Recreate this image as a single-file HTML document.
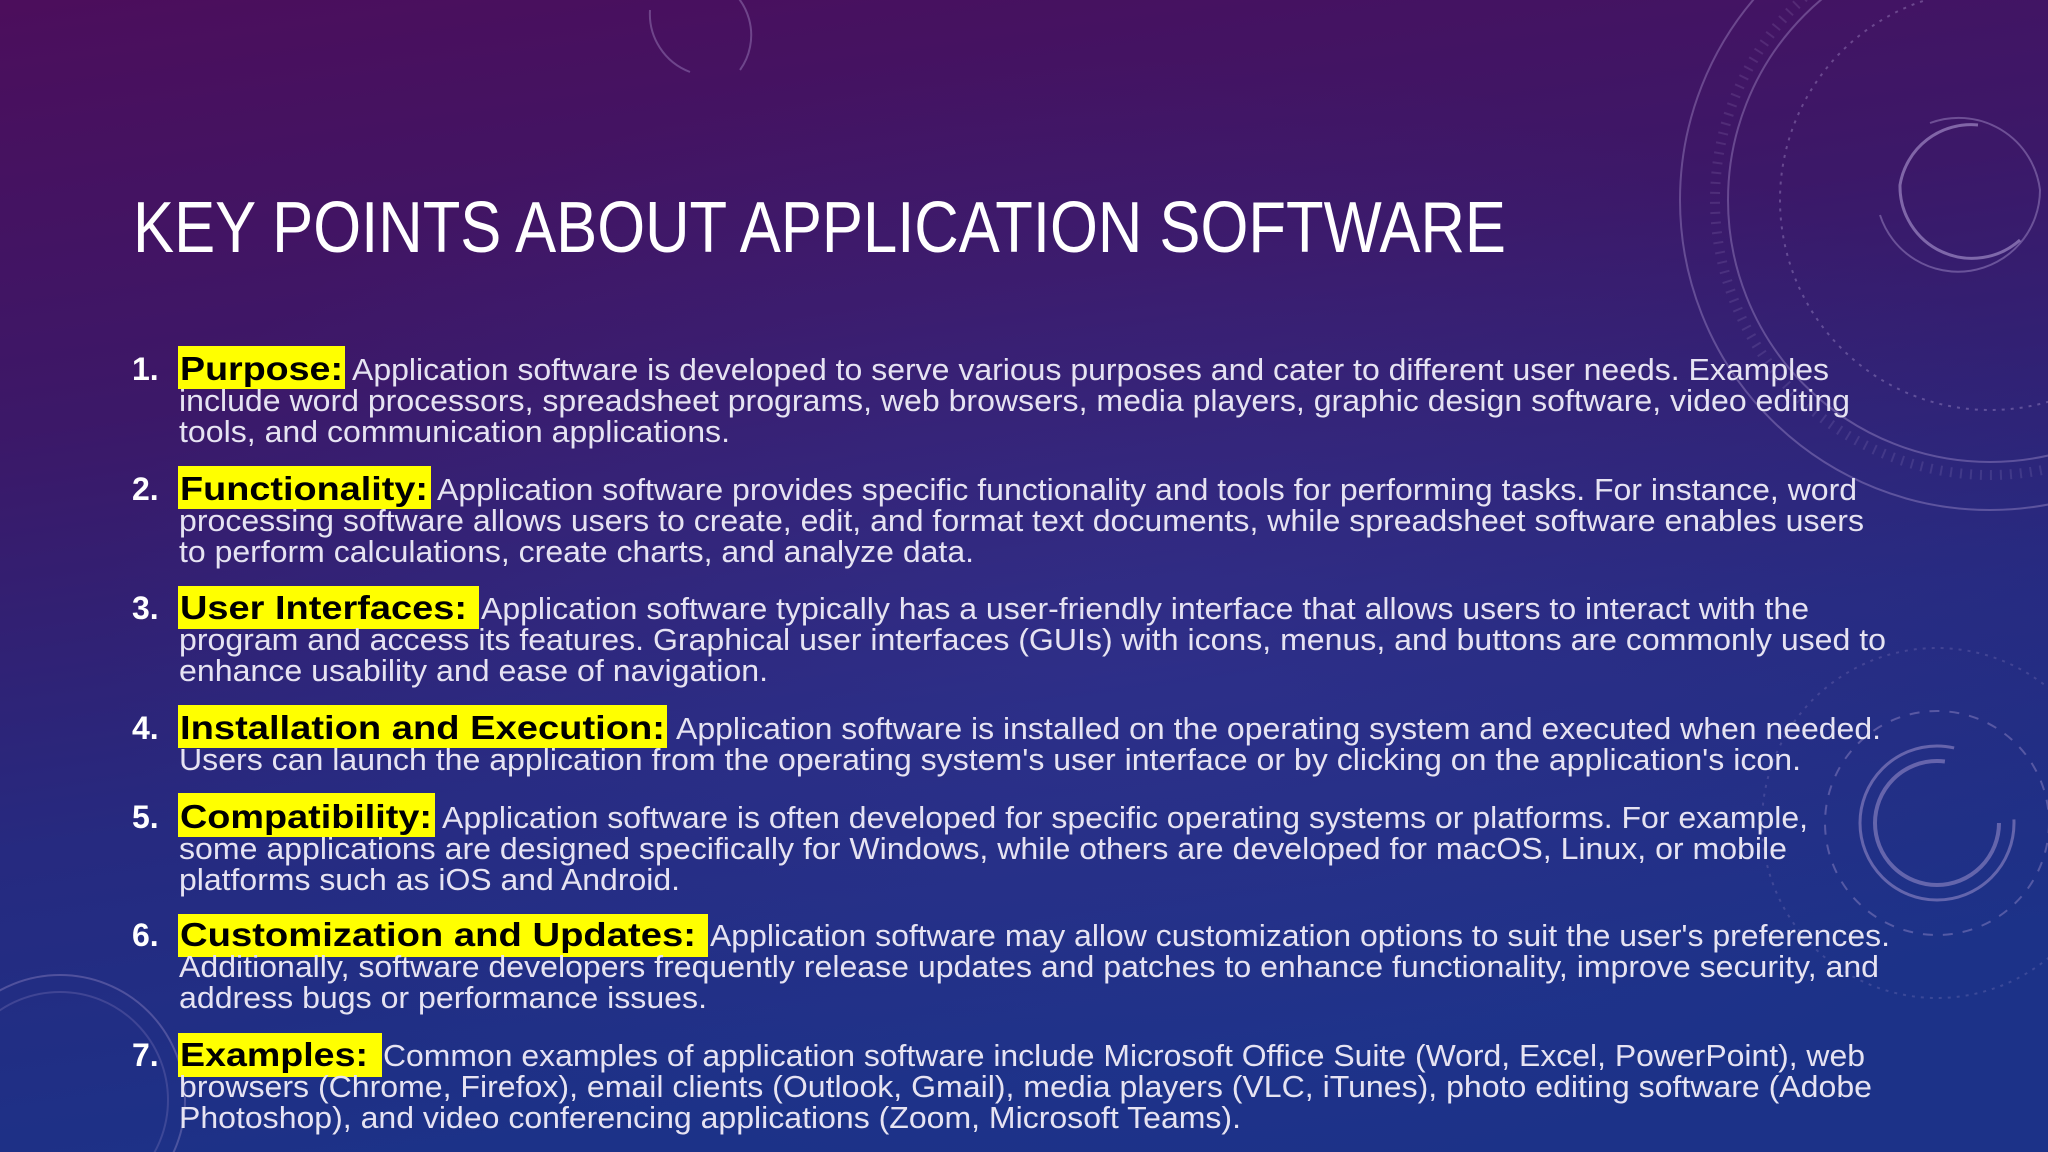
<!DOCTYPE html>
<html><head><meta charset="utf-8"><style>
html,body{margin:0;padding:0;width:2048px;height:1152px;overflow:hidden;}
svg{display:block;}
.b{font-family:"Liberation Sans",Arial,sans-serif;font-size:31px;fill:#e6e3f2;}
.n{font-family:"Liberation Sans",Arial,sans-serif;font-size:32px;font-weight:bold;fill:#fff;}
.l{font-family:"Liberation Sans",Arial,sans-serif;font-size:33px;font-weight:bold;fill:#000;}
.hl{fill:#ffff00;}
</style></head><body>
<svg width="2048" height="1152" viewBox="0 0 2048 1152" xmlns="http://www.w3.org/2000/svg">
<defs>
<linearGradient id="bg" x1="0" y1="0" x2="0.25" y2="1">
<stop offset="0" stop-color="#4c0e5c"/>
<stop offset="0.35" stop-color="#3c1868"/>
<stop offset="0.7" stop-color="#262a80"/>
<stop offset="1" stop-color="#1c3288"/>
</linearGradient>
<radialGradient id="glow" cx="0.55" cy="0.55" r="0.5">
<stop offset="0" stop-color="#3a3a9a" stop-opacity="0.35"/>
<stop offset="1" stop-color="#3a3a9a" stop-opacity="0"/>
</radialGradient>
</defs>
<rect width="2048" height="1152" fill="url(#bg)"/>
<rect width="2048" height="1152" fill="url(#glow)"/>
<g fill="none" stroke="#b9a6dc" stroke-opacity="0.35" stroke-width="2">
<circle cx="1990" cy="200" r="310"/>
<circle cx="1990" cy="200" r="262"/>
<circle cx="1990" cy="200" r="275" stroke-dasharray="2 8" stroke-width="10" stroke-opacity="0.15"/>
<circle cx="1990" cy="200" r="210" stroke-dasharray="3 6"/>
<path d="M1978 125 A72 72 0 0 0 1900 185 A72 72 0 0 0 2020 240" stroke-width="3" stroke-opacity="0.55"/>
<path d="M1930 123 A82 82 0 0 1 2040 190 A82 82 0 0 1 1880 215" stroke-opacity="0.4"/>
<path d="M715 -20 A60 60 0 0 1 740 70 M690 72 A62 62 0 0 1 650 10" />
<circle cx="1937" cy="823" r="77" stroke-width="3" stroke-dasharray="380 100" stroke-opacity="0.45"/>
<circle cx="1937" cy="823" r="62" stroke-width="4" stroke-dasharray="300 90" stroke-opacity="0.45"/>
<circle cx="1937" cy="823" r="112" stroke-dasharray="10 10"/>
<circle cx="1937" cy="823" r="175" stroke-dasharray="3 6" stroke-opacity="0.2"/>
<circle cx="60" cy="1100" r="125" stroke-opacity="0.3"/>
<circle cx="60" cy="1100" r="108" stroke-opacity="0.2"/>
</g>
<text x="133" y="252" font-family="Liberation Sans, sans-serif" font-size="72" fill="#fff" textLength="1373" lengthAdjust="spacingAndGlyphs">KEY POINTS ABOUT APPLICATION SOFTWARE</text>

<rect class="hl" x="178" y="346" width="167" height="43"/>
<text class="n" x="132" y="380">1.</text>
<text class="l" x="180" y="380" textLength="163" lengthAdjust="spacingAndGlyphs">Purpose:</text>
<text class="b" x="352" y="380" textLength="1477" lengthAdjust="spacingAndGlyphs">Application software is developed to serve various purposes and cater to different user needs. Examples</text>
<text class="b" x="179" y="411" textLength="1671" lengthAdjust="spacingAndGlyphs">include word processors, spreadsheet programs, web browsers, media players, graphic design software, video editing</text>
<text class="b" x="179" y="442" textLength="551" lengthAdjust="spacingAndGlyphs">tools, and communication applications.</text>

<rect class="hl" x="178" y="466" width="253" height="43"/>
<text class="n" x="132" y="500">2.</text>
<text class="l" x="180" y="500" textLength="248" lengthAdjust="spacingAndGlyphs">Functionality:</text>
<text class="b" x="437" y="500" textLength="1420" lengthAdjust="spacingAndGlyphs">Application software provides specific functionality and tools for performing tasks. For instance, word</text>
<text class="b" x="179" y="531" textLength="1685" lengthAdjust="spacingAndGlyphs">processing software allows users to create, edit, and format text documents, while spreadsheet software enables users</text>
<text class="b" x="179" y="562" textLength="795" lengthAdjust="spacingAndGlyphs">to perform calculations, create charts, and analyze data.</text>

<rect class="hl" x="178" y="586" width="301" height="43"/>
<text class="n" x="132" y="619">3.</text>
<text class="l" x="180" y="619" textLength="287" lengthAdjust="spacingAndGlyphs">User Interfaces:</text>
<text class="b" x="481" y="619" textLength="1328" lengthAdjust="spacingAndGlyphs">Application software typically has a user-friendly interface that allows users to interact with the</text>
<text class="b" x="179" y="650" textLength="1707" lengthAdjust="spacingAndGlyphs">program and access its features. Graphical user interfaces (GUIs) with icons, menus, and buttons are commonly used to</text>
<text class="b" x="179" y="681" textLength="589" lengthAdjust="spacingAndGlyphs">enhance usability and ease of navigation.</text>

<rect class="hl" x="178" y="705" width="489" height="43"/>
<text class="n" x="132" y="739">4.</text>
<text class="l" x="180" y="739" textLength="485" lengthAdjust="spacingAndGlyphs">Installation and Execution:</text>
<text class="b" x="676" y="739" textLength="1205" lengthAdjust="spacingAndGlyphs">Application software is installed on the operating system and executed when needed.</text>
<text class="b" x="179" y="770" textLength="1622" lengthAdjust="spacingAndGlyphs">Users can launch the application from the operating system's user interface or by clicking on the application's icon.</text>

<rect class="hl" x="178" y="793" width="257" height="44"/>
<text class="n" x="132" y="828">5.</text>
<text class="l" x="180" y="828" textLength="252" lengthAdjust="spacingAndGlyphs">Compatibility:</text>
<text class="b" x="442" y="828" textLength="1366" lengthAdjust="spacingAndGlyphs">Application software is often developed for specific operating systems or platforms. For example,</text>
<text class="b" x="179" y="859" textLength="1608" lengthAdjust="spacingAndGlyphs">some applications are designed specifically for Windows, while others are developed for macOS, Linux, or mobile</text>
<text class="b" x="179" y="890" textLength="501" lengthAdjust="spacingAndGlyphs">platforms such as iOS and Android.</text>

<rect class="hl" x="178" y="914" width="530" height="43"/>
<text class="n" x="132" y="946">6.</text>
<text class="l" x="180" y="946" textLength="516" lengthAdjust="spacingAndGlyphs">Customization and Updates:</text>
<text class="b" x="710" y="946" textLength="1180" lengthAdjust="spacingAndGlyphs">Application software may allow customization options to suit the user's preferences.</text>
<text class="b" x="179" y="977" textLength="1700" lengthAdjust="spacingAndGlyphs">Additionally, software developers frequently release updates and patches to enhance functionality, improve security, and</text>
<text class="b" x="179" y="1008" textLength="528" lengthAdjust="spacingAndGlyphs">address bugs or performance issues.</text>

<rect class="hl" x="178" y="1033" width="204" height="44"/>
<text class="n" x="132" y="1066">7.</text>
<text class="l" x="180" y="1066" textLength="188" lengthAdjust="spacingAndGlyphs">Examples:</text>
<text class="b" x="383" y="1066" textLength="1482" lengthAdjust="spacingAndGlyphs">Common examples of application software include Microsoft Office Suite (Word, Excel, PowerPoint), web</text>
<text class="b" x="179" y="1097" textLength="1693" lengthAdjust="spacingAndGlyphs">browsers (Chrome, Firefox), email clients (Outlook, Gmail), media players (VLC, iTunes), photo editing software (Adobe</text>
<text class="b" x="179" y="1128" textLength="1062" lengthAdjust="spacingAndGlyphs">Photoshop), and video conferencing applications (Zoom, Microsoft Teams).</text>
</svg>
</body></html>
